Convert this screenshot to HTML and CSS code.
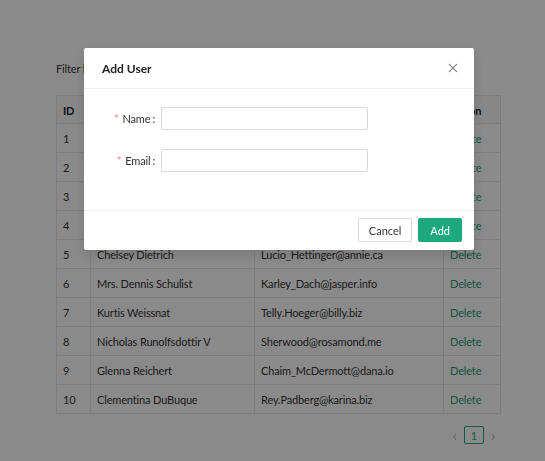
FILE: index.html
```html
<!DOCTYPE html>
<html>
<head>
<meta charset="utf-8">
<link rel="stylesheet" href="styles.css">
</head>
<body>
<div class="page">
  <div class="filter">
    <span class="filter-label">Filter by name:</span>
    <input class="filter-input" type="text">
  </div>
  <table class="users">
    <thead>
      <tr><th class="c-id">ID</th><th class="c-name">Name</th><th class="c-email">Email</th><th class="c-act">Action</th></tr>
    </thead>
    <tbody>
      <tr><td>1</td><td>Leanne Graham</td><td>Sincere@april.biz</td><td><a class="del">Delete</a></td></tr>
      <tr><td>2</td><td>Ervin Howell</td><td>Shanna@melissa.tv</td><td><a class="del">Delete</a></td></tr>
      <tr><td>3</td><td>Clementine Bauch</td><td>Nathan@yesenia.net</td><td><a class="del">Delete</a></td></tr>
      <tr><td>4</td><td>Patricia Lebsack</td><td>Julianne.OConner@kory.org</td><td><a class="del">Delete</a></td></tr>
      <tr><td>5</td><td>Chelsey Dietrich</td><td>Lucio_Hettinger@annie.ca</td><td><a class="del">Delete</a></td></tr>
      <tr><td>6</td><td>Mrs. Dennis Schulist</td><td>Karley_Dach@jasper.info</td><td><a class="del">Delete</a></td></tr>
      <tr><td>7</td><td>Kurtis Weissnat</td><td>Telly.Hoeger@billy.biz</td><td><a class="del">Delete</a></td></tr>
      <tr><td>8</td><td>Nicholas Runolfsdottir V</td><td>Sherwood@rosamond.me</td><td><a class="del">Delete</a></td></tr>
      <tr><td>9</td><td>Glenna Reichert</td><td>Chaim_McDermott@dana.io</td><td><a class="del">Delete</a></td></tr>
      <tr><td>10</td><td>Clementina DuBuque</td><td>Rey.Padberg@karina.biz</td><td><a class="del">Delete</a></td></tr>
    </tbody>
  </table>
  <div class="pager">
    <span class="arrow">&#8249;</span>
    <span class="pnum">1</span>
    <span class="arrow">&#8250;</span>
  </div>
</div>

<div class="mask"></div>
<div class="modal">
  <div class="m-head">
    <span class="m-title">Add User</span>
    <svg class="m-close" width="10" height="10" viewBox="0 0 10 10"><path d="M1 1L9 9M9 1L1 9" stroke="#8c8c8c" stroke-width="1.1" fill="none"/></svg>
  </div>
  <div class="m-body">
    <div class="f-row">
      <label class="f-label"><span class="req">*</span>Name<span class="colon">:</span></label>
      <input class="f-input" type="text">
    </div>
    <div class="f-row">
      <label class="f-label"><span class="req">*</span>Email<span class="colon">:</span></label>
      <input class="f-input" type="text">
    </div>
  </div>
  <div class="m-foot">
    <button class="btn btn-default">Cancel</button>
    <button class="btn btn-primary">Add</button>
  </div>
</div>
</body>
</html>
```

FILE: styles.css
```css
* { box-sizing: border-box; }
html, body { margin: 0; padding: 0; }
body {
  font-family: "Lato", "Open Sans", sans-serif;
  font-size: 11px;
  letter-spacing: -0.15px;
  color: #333;
  background: #fff;
  width: 545px;
  height: 461px;
  overflow: hidden;
}
.page {
  padding: 58px 44px 0 56px;
}
.filter {
  display: flex;
  align-items: center;
  gap: 8px;
  height: 20px;
  margin-bottom: 17px;
}
.filter-input {
  width: 160px;
  height: 22px;
  border: 1px solid #d9d9d9;
  border-radius: 2px;
}
.users {
  width: 445px;
  border-collapse: collapse;
  border: 1px solid #e8e8e8;
}
.users th, .users td {
  border: 1px solid #e8e8e8;
  height: 29px;
  padding: 0 6px;
  text-align: left;
  font-weight: normal;
}
.users th {
  background: #fafafa;
  font-weight: bold;
  color: #222;
  height: 28px;
  padding-top: 2px;
}
.c-id { width: 34px; }
.c-name { width: 164px; }
.c-email { width: 189px; }
.del { color: #1f9d74; }
.pager {
  display: flex;
  justify-content: flex-end;
  align-items: center;
  gap: 7px;
  margin-top: 12px;
  padding-right: 6px;
}
.arrow { color: #bbb; font-size: 15px; line-height: 18px; }
.pnum {
  width: 20px;
  height: 18px;
  border: 1px solid #1ea97c;
  border-radius: 2px;
  color: #1ea97c;
  display: flex;
  align-items: center;
  justify-content: center;
}
.mask {
  position: fixed;
  inset: 0;
  background: rgba(0, 0, 0, 0.46);
}
.modal {
  position: fixed;
  left: 84px;
  top: 48px;
  width: 390px;
  background: #fff;
  border-radius: 2px;
  box-shadow: 0 4px 12px rgba(0,0,0,0.15);
}
.m-head {
  height: 41px;
  padding: 0 16px 0 18px;
  display: flex;
  align-items: center;
  justify-content: space-between;
  border-bottom: 1px solid #f0f0f0;
}
.m-title { font-size: 12px; font-weight: bold; color: #222; letter-spacing: 0; }
.m-body {
  padding: 18px 0 38px 0;
  display: flex;
  flex-direction: column;
  gap: 19px;
}
.f-row {
  display: flex;
  align-items: center;
  gap: 6px;
}
.f-label {
  width: 71px;
  text-align: right;
  color: #333;
}
.req { color: #ff7875; margin-right: 4px; }
.colon { margin-left: 2px; }
.f-input {
  width: 207px;
  height: 23px;
  border: 1px solid #d9d9d9;
  border-radius: 2px;
}
.m-foot {
  border-top: 1px solid #f0f0f0;
  padding: 7px 12px 8px 0;
  display: flex;
  justify-content: flex-end;
  gap: 6px;
}
.btn {
  height: 24px;
  font-family: inherit;
  font-size: 11px;
  border-radius: 2px;
}
.btn-default { background: #fff; border: 1px solid #d9d9d9; color: #333; padding: 0 10px; }
.btn-primary { background: #1ea97c; border: 1px solid #1ea97c; color: #fff; padding: 0 11px; }
```
